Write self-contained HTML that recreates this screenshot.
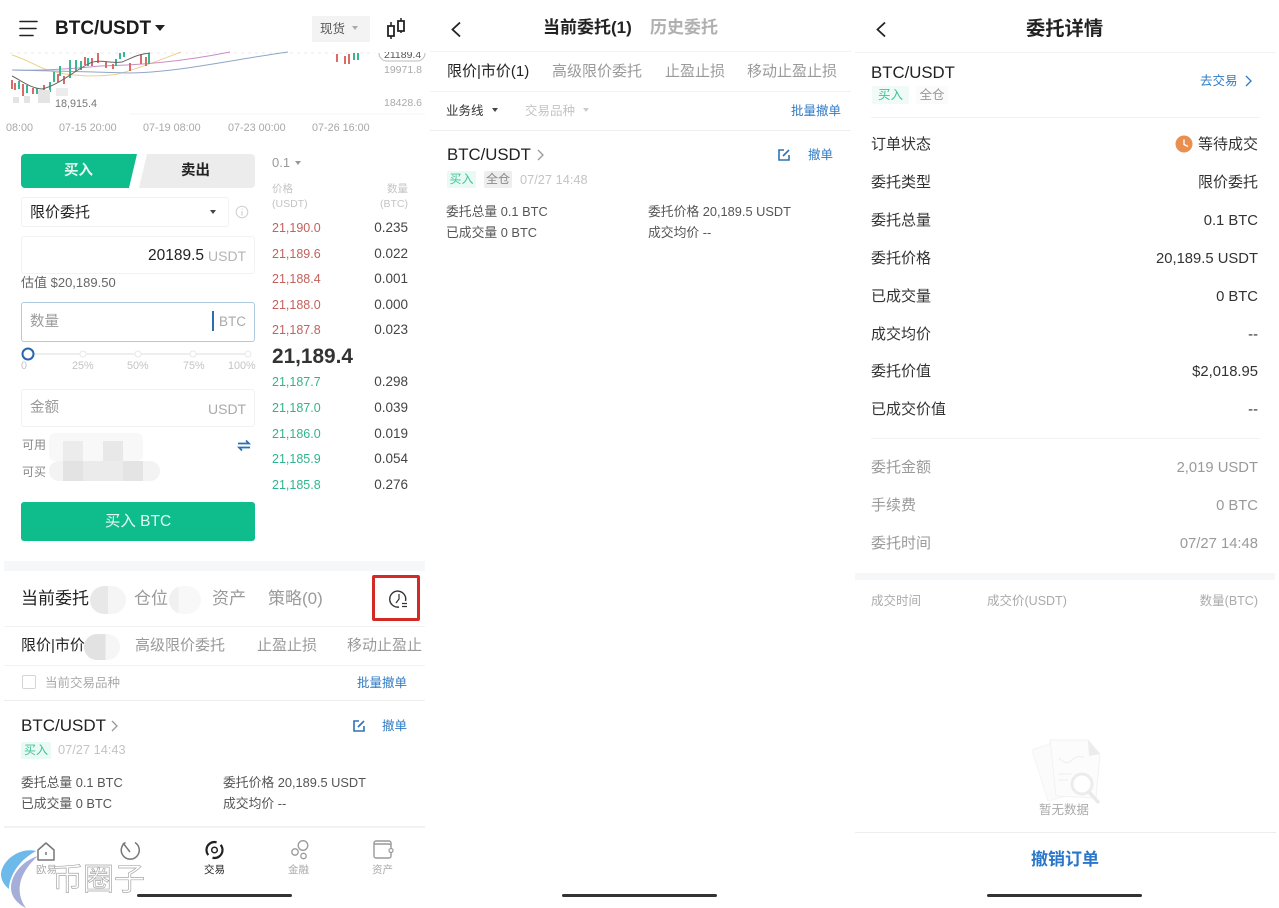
<!DOCTYPE html>
<html lang="zh"><head><meta charset="utf-8"><title>BTC/USDT</title>
<style>
html,body{margin:0;padding:0;background:#fff}
#p{position:relative;width:1279px;height:908px;overflow:hidden;background:#fff;font-family:"Liberation Sans","Noto Sans CJK SC",sans-serif;color:#222;filter:blur(.3px)}
.t{position:absolute;white-space:nowrap;line-height:20px;height:20px}
.l{position:absolute;height:1px;background:#f1f2f3}
.g{color:#9a9a9a}.lg{color:#c4c4c4}.b{color:#2f7bc4}.d{color:#555}
.red{color:#c4615c;font-size:12.500px;left:272px}
.grn{color:#2fb58d;font-size:12.500px;left:272px}
.q{color:#444;font-size:13.500px;left:340px;width:68px;text-align:right}
.box{position:absolute;box-sizing:border-box;border:1px solid #f2f2f2;border-radius:3px}
.tag{position:absolute;background:#e9f9f3;color:#3cc498;font-size:12px;line-height:17px;height:17px;text-align:center;border-radius:2px}
.bl{position:absolute}
.car{position:absolute;width:0;height:0;border-left:3.500px solid transparent;border-right:3.500px solid transparent;border-top:4.500px solid #444}
.bar{position:absolute;height:3px;width:155px;background:#333;border-radius:2px;top:894px}
.x{font-size:10.800px;color:#a8a8a8;top:118px}
.v{left:1100px;width:158px;text-align:right;font-size:14.800px;color:#333}
.k{left:871px;font-size:15px;color:#333}
svg{position:absolute;overflow:visible}
</style></head><body><div id="p">

<!-- PANEL 1 -->
<svg style="left:0;top:0" width="430" height="130">
<g stroke="#222" stroke-width="1.600" fill="none" stroke-linecap="round"><path d="M20 21.500H37M20 28.500H36M20 35.500H33"/></g>
<path d="M388 26h6v10h-6z M398 21h6v10h-6z" fill="none" stroke="#222" stroke-width="1.800"/>
<path d="M391 22v4M391 36v3M401 18v3M401 31v2" stroke="#222" stroke-width="1.500"/>
<path d="M10 53H375" stroke="#e8e8e8" stroke-dasharray="3 4"/>
<path d="M130 114H425" stroke="#f6f6f6"/>
<g fill="none" stroke-width="1">
<path d="M12 55C28 60 36 66 47 70C70 77 100 77 118 74C140 68 160 60 181 52" stroke="#ecd18a"/>
<path d="M12 70C40 71 70 69 100 66C140 65 180 62 230 52" stroke="#c98fc6"/>
<path d="M12 70C60 71 90 72 130 73C180 72 230 60 288 52" stroke="#8fa6c7"/>
</g>
<g stroke-width="2">
<g stroke="#d96b69"><path d="M12 80v9M15 83v7M23 84v12M33 88v6M44 85v8M58 74v8M64 76v8M85 57v8M92 58v8M98 53v10M106 62v6M113 64v5M130 63v8M141 54v10M146 57v9M337 54v8M345 56v8M349 54v10"/></g>
<g stroke="#37b892"><path d="M19 81v8M27 85v8M37 88v6M50 82v10M54 72v10M60 66v10M70 60v18M76 60v12M81 61v9M88 58v8M116 59v7M120 53v6M124 52v5M149 53v11M354 53v7M358 53v7"/></g>
</g>
<path d="M12 76C22 81 30 88 42 89C58 85 70 74 88 64C100 58 110 64 122 62C132 58 138 54 150 53" fill="none" stroke="#666"/>
<g fill="#e4e4e4"><rect x="13" y="97" width="6" height="6"/><rect x="24" y="96" width="6" height="7"/><rect x="38" y="90" width="12" height="13"/><rect x="56" y="88" width="12" height="8" fill="#ececec"/></g>
<path d="M379 53a8 8 0 0 0 7 8h32a8 8 0 0 0 7-8" fill="none" stroke="#bbb"/>
</svg>
<div class="t" style="left:55px;top:19px;font-size:19px;font-weight:700;color:#1c1c1c">BTC/USDT</div>
<div class="car" style="left:155px;top:25px;border-left-width:5px;border-right-width:5px;border-top:6px solid #222"></div>
<div class="bl" style="left:312px;top:16px;width:58px;height:26px;background:#f3f3f3"></div>
<div class="t d" style="left:320px;top:19px;font-size:12.500px">现货</div>
<div class="car" style="left:352px;top:26px;border-top-color:#aaa"></div>
<div class="bl" style="left:380px;top:52px;width:45px;height:10px;overflow:hidden"><div class="t" style="left:4px;top:-7px;font-size:10.500px;color:#555">21189.4</div></div>
<div class="t g" style="left:384px;top:60px;font-size:10.500px;color:#aaa">19971.8</div>
<div class="t g" style="left:384px;top:93px;font-size:10.500px;color:#aaa">18428.6</div>
<div class="t d" style="left:55px;top:94px;font-size:10.800px;color:#777">18,915.4</div>
<div class="t x" style="left:6px">08:00</div>
<div class="t x" style="left:59px">07-15 20:00</div>
<div class="t x" style="left:143px">07-19 08:00</div>
<div class="t x" style="left:228px">07-23 00:00</div>
<div class="t x" style="left:312px">07-26 16:00</div>

<svg style="left:0;top:150px" width="260" height="40">
<path d="M25 4H137L129 38H25a4 4 0 0 1-4-4V8a4 4 0 0 1 4-4z" fill="#0fbc8c"/>
<path d="M147 4H251a4 4 0 0 1 4 4V34a4 4 0 0 1-4 4H139z" fill="#ececec"/>
</svg>
<div class="t" style="left:64px;top:161px;font-size:14.500px;font-weight:700;color:#e4f9f2">买入</div>
<div class="t" style="left:181px;top:161px;font-size:14.500px;font-weight:700">卖出</div>
<div class="box" style="left:21px;top:197px;width:208px;height:30px"></div>
<div class="t" style="left:30px;top:203px;font-size:15px;color:#222">限价委托</div>
<div class="car" style="left:210px;top:210px"></div>
<svg style="left:235px;top:205px" width="14" height="14"><circle cx="7" cy="7" r="5.800" fill="none" stroke="#cfcfcf"/><path d="M7.300 3.800v.8M7 6v4.500" stroke="#c8c8c8"/></svg>
<div class="box" style="left:21px;top:236px;width:234px;height:38px"></div>
<div class="t" style="left:148px;top:246px;font-size:15.500px;color:#222">20189.5</div>
<div class="t lg" style="left:208px;top:246px;font-size:14px;color:#b5b5b5">USDT</div>
<div class="t d" style="left:21px;top:273px;font-size:13px;color:#666">估值 $20,189.50</div>
<div class="box" style="left:21px;top:302px;width:234px;height:40px;border:1px solid #aecadf"></div>
<div class="t g" style="left:30px;top:312px;font-size:14.500px">数量</div>
<div class="bl" style="left:212px;top:311px;width:2px;height:20px;background:#2d6eb0"></div>
<div class="t g" style="left:219px;top:312px;font-size:13.500px;color:#aaa">BTC</div>
<svg style="left:0;top:345px" width="260" height="20">
<path d="M28 9H248" stroke="#eee" stroke-width="2"/>
<g fill="#fff" stroke="#e8e8e8"><circle cx="83" cy="9" r="3"/><circle cx="138" cy="9" r="3"/><circle cx="193" cy="9" r="3"/><circle cx="248" cy="9" r="3"/></g>
<circle cx="28" cy="9" r="5.500" fill="#fff" stroke="#2767ad" stroke-width="2"/>
</svg>
<div class="t lg" style="left:21px;top:356px;font-size:10.800px">0</div>
<div class="t lg" style="left:72px;top:356px;font-size:10.800px">25%</div>
<div class="t lg" style="left:127px;top:356px;font-size:10.800px">50%</div>
<div class="t lg" style="left:183px;top:356px;font-size:10.800px">75%</div>
<div class="t lg" style="left:228px;top:356px;font-size:10.800px">100%</div>
<div class="box" style="left:21px;top:389px;width:234px;height:38px"></div>
<div class="t g" style="left:30px;top:398px;font-size:14.500px">金额</div>
<div class="t g" style="left:208px;top:399px;font-size:14px;color:#aaa">USDT</div>
<div class="t g" style="left:22px;top:435px;font-size:12px;color:#888">可用</div>
<div class="t g" style="left:22px;top:462px;font-size:12px;color:#888">可买</div>
<div class="bl" style="left:49px;top:433px;width:94px;height:28px;background:#f8f8f8;border-radius:6px"></div>
<div class="bl" style="left:49px;top:461px;width:111px;height:20px;background:#f3f3f3;border-radius:10px"></div>
<div class="bl" style="left:63px;top:441px;width:20px;height:20px;background:#ececec"></div>
<div class="bl" style="left:103px;top:441px;width:20px;height:20px;background:#e8e8e8"></div>
<div class="bl" style="left:63px;top:461px;width:20px;height:20px;background:#e3e3e3"></div>
<div class="bl" style="left:83px;top:461px;width:40px;height:20px;background:#ebebeb"></div>
<div class="bl" style="left:123px;top:461px;width:20px;height:20px;background:#e4e4e4"></div>
<svg style="left:237px;top:439px" width="14" height="13"><path d="M1 4.500H12L9 1.500M13 8.500H2L5 11.500" fill="none" stroke="#2a70b5" stroke-width="1.700"/></svg>
<div class="bl" style="left:21px;top:502px;width:234px;height:39px;background:#0fbc8c;border-radius:3px"></div>
<div class="t" style="left:21px;width:234px;text-align:center;top:512px;font-size:15.500px;color:#e4f9f2">买入 BTC</div>

<div class="t g" style="left:272px;top:153px;font-size:13px">0.1</div>
<div class="car" style="left:295px;top:161px;border-top-color:#999"></div>
<div class="t lg" style="left:272px;top:179px;font-size:10.500px">价格</div>
<div class="t lg" style="left:272px;top:194px;font-size:10.500px">(USDT)</div>
<div class="t lg" style="left:340px;width:68px;text-align:right;top:179px;font-size:10.500px">数量</div>
<div class="t lg" style="left:340px;width:68px;text-align:right;top:194px;font-size:10.500px">(BTC)</div>
<div class="t red" style="top:218px">21,190.0</div><div class="t q" style="top:218px">0.235</div>
<div class="t red" style="top:244px">21,189.6</div><div class="t q" style="top:244px">0.022</div>
<div class="t red" style="top:269px">21,188.4</div><div class="t q" style="top:269px">0.001</div>
<div class="t red" style="top:295px">21,188.0</div><div class="t q" style="top:295px">0.000</div>
<div class="t red" style="top:320px">21,187.8</div><div class="t q" style="top:320px">0.023</div>
<div class="t" style="left:272px;top:347px;font-size:20.800px;font-weight:700;color:#333">21,189.4</div>
<div class="t grn" style="top:372px">21,187.7</div><div class="t q" style="top:372px">0.298</div>
<div class="t grn" style="top:398px">21,187.0</div><div class="t q" style="top:398px">0.039</div>
<div class="t grn" style="top:424px">21,186.0</div><div class="t q" style="top:424px">0.019</div>
<div class="t grn" style="top:449px">21,185.9</div><div class="t q" style="top:449px">0.054</div>
<div class="t grn" style="top:475px">21,185.8</div><div class="t q" style="top:475px">0.276</div>

<div class="bl" style="left:4px;top:561px;width:421px;height:10px;background:#f6f7f8"></div>
<div class="t" style="left:21px;top:589px;font-size:17px;color:#222">当前委托</div>
<div class="bl" style="left:90px;top:586px;width:36px;height:28px;background:linear-gradient(90deg,#e8e8e8 50%,#f5f5f5 50%);border-radius:14px"></div>
<div class="t g" style="left:134px;top:589px;font-size:17px">仓位</div>
<div class="bl" style="left:169px;top:586px;width:32px;height:28px;background:linear-gradient(90deg,#f0f0f0 30%,#f8f8f8 30%);border-radius:14px"></div>
<div class="t g" style="left:212px;top:589px;font-size:17px">资产</div>
<div class="t g" style="left:268px;top:589px;font-size:17px">策略(0)</div>
<div class="bl" style="left:372px;top:575px;width:48px;height:46px;box-sizing:border-box;border:3px solid #d32a26;border-radius:2px"></div>
<svg style="left:388px;top:589px" width="22" height="22"><path d="M17.500 12A8 8 0 1 0 11 18" fill="none" stroke="#333" stroke-width="1.400"/><path d="M11 5V10L8 14" fill="none" stroke="#333" stroke-width="1.200"/><path d="M14 14.500h5M14 17.500h5" stroke="#333" stroke-width="1.200"/></svg>
<div class="l" style="left:4px;top:626px;width:421px"></div>
<div class="t" style="left:21px;top:636px;font-size:15px">限价|市价</div>
<div class="bl" style="left:84px;top:634px;width:36px;height:26px;background:linear-gradient(90deg,#e2e2e2 60%,#f6f6f6 60%);border-radius:13px"></div>
<div class="t g" style="left:135px;top:636px;font-size:15px">高级限价委托</div>
<div class="t g" style="left:257px;top:636px;font-size:15px">止盈止损</div>
<div class="bl" style="left:347px;top:630px;width:75px;height:30px;overflow:hidden"><div class="t g" style="left:0;top:6px;font-size:15px">移动止盈止损</div></div>
<div class="l" style="left:4px;top:665px;width:421px"></div>
<div class="bl" style="left:22px;top:675px;width:14px;height:14px;border:1.500px solid #d5d5d5;border-radius:2px;box-sizing:border-box"></div>
<div class="t lg" style="left:45px;top:673px;font-size:12.500px;color:#aaa">当前交易品种</div>
<div class="t b" style="left:357px;top:673px;font-size:12.500px">批量撤单</div>
<div class="l" style="left:4px;top:700px;width:421px;background:#eee"></div>
<div class="t" style="left:21px;top:716px;font-size:17px">BTC/USDT</div>
<svg style="left:110px;top:720px" width="10" height="12"><path d="M2 1L7 6L2 11" fill="none" stroke="#999" stroke-width="1.300"/></svg>
<svg style="left:352px;top:719px" width="14" height="14"><path d="M7 2H2V12H12V7M6 8L12 2" fill="none" stroke="#2f74b5" stroke-width="1.600"/></svg>
<div class="t b" style="left:382px;top:716px;font-size:12.500px">撤单</div>
<div class="tag" style="left:21px;top:742px;width:30px">买入</div>
<div class="t lg" style="left:58px;top:740px;font-size:12.800px">07/27 14:43</div>
<div class="t d" style="left:21px;top:773px;font-size:12.800px">委托总量 0.1 BTC</div>
<div class="t d" style="left:223px;top:773px;font-size:12.800px">委托价格 20,189.5 USDT</div>
<div class="t d" style="left:21px;top:794px;font-size:12.800px">已成交量 0 BTC</div>
<div class="t d" style="left:223px;top:794px;font-size:12.800px">成交均价 --</div>
<div class="l" style="left:4px;top:826px;width:421px;height:2px"></div>

<svg style="left:0;top:835px" width="430" height="73">
<path d="M38 15L46 8L54 15V25H38z" fill="none" stroke="#777" stroke-width="1.500" stroke-linejoin="round"/><path d="M46 17v3" stroke="#777" stroke-width="1.500"/>
<path d="M125.500 7.500A9 9 0 1 0 135 7.500" fill="none" stroke="#777" stroke-width="1.500"/><path d="M123 8L130 17" stroke="#777" stroke-width="1.500"/>
<circle cx="214.500" cy="15" r="8" fill="none" stroke="#222" stroke-width="2.200" stroke-dasharray="20 5.100" transform="rotate(-40 214.500 15)"/><circle cx="214.500" cy="15" r="2.800" fill="none" stroke="#222" stroke-width="1.500"/>
<g fill="none" stroke="#999" stroke-width="1.300"><circle cx="303" cy="10.500" r="4.800"/><circle cx="295" cy="17" r="3.200"/><circle cx="303.500" cy="21" r="2.700"/></g>
<path d="M391 11V8a2 2 0 0 0-2-2H376a2 2 0 0 0-2 2V21a2 2 0 0 0 2 2H389a2 2 0 0 0 2-2V18M374 9H389a2 2 0 0 1 2 2V13" fill="none" stroke="#999" stroke-width="1.400"/><circle cx="391" cy="15.500" r="2" fill="#fff" stroke="#999" stroke-width="1.200"/>
</svg>
<div class="t lg" style="left:36px;top:860px;font-size:10.500px;color:#aaa">欧易</div>
<div class="t" style="left:204px;top:860px;font-size:10.500px;color:#222">交易</div>
<div class="t lg" style="left:288px;top:860px;font-size:10.500px;color:#aaa">金融</div>
<div class="t lg" style="left:372px;top:860px;font-size:10.500px;color:#aaa">资产</div>
<div class="bar" style="left:137px"></div>

<svg style="left:0;top:830px" width="60" height="78">
<path d="M36 21C20 17 2 30 1 44C1 50 4 55 9 59C9 49 16 32 36 21z" fill="#6db9ea"/>
<path d="M38 26C22 31 11 45 11 58C11 67 18 74 26 78C20 70 18 60 21 50C24 41 30 33 38 26z" fill="#a5add9"/>
</svg>
<div class="t" style="left:52px;top:865px;height:30px;line-height:30px;font-size:31px;color:rgba(255,255,255,.85);-webkit-text-stroke:.7px #a8a8a8">币圈子</div>

<!-- PANEL 2 -->
<div class="l" style="left:430px;top:51px;width:421px"></div>
<svg style="left:450px;top:21px" width="12" height="17"><path d="M10 1.500L2.500 8.500L10 15.500" fill="none" stroke="#222" stroke-width="1.800"/></svg>
<div class="t" style="left:543px;top:18px;font-size:17px;font-weight:700">当前委托(1)</div>
<div class="t" style="left:650px;top:18px;font-size:17px;font-weight:700;color:#b0b0b0">历史委托</div>
<div class="t" style="left:447px;top:62px;font-size:15px">限价|市价(1)</div>
<div class="t g" style="left:552px;top:62px;font-size:15px">高级限价委托</div>
<div class="t g" style="left:665px;top:62px;font-size:15px">止盈止损</div>
<div class="t g" style="left:747px;top:62px;font-size:15px">移动止盈止损</div>
<div class="l" style="left:430px;top:91px;width:421px"></div>
<div class="t d" style="left:446px;top:101px;font-size:12.500px;color:#333">业务线</div>
<div class="car" style="left:492px;top:108px"></div>
<div class="t lg" style="left:525px;top:101px;font-size:12.500px">交易品种</div>
<div class="car" style="left:583px;top:108px;border-top-color:#ccc"></div>
<div class="t b" style="left:791px;top:101px;font-size:12.500px">批量撤单</div>
<div class="l" style="left:430px;top:130px;width:421px;background:#eee"></div>
<div class="t" style="left:447px;top:145px;font-size:16.800px">BTC/USDT</div>
<svg style="left:536px;top:149px" width="10" height="12"><path d="M2 1L7 6L2 11" fill="none" stroke="#999" stroke-width="1.300"/></svg>
<svg style="left:777px;top:148px" width="14" height="14"><path d="M7 2H2V12H12V7M6 8L12 2" fill="none" stroke="#2f74b5" stroke-width="1.600"/></svg>
<div class="t b" style="left:808px;top:145px;font-size:12.500px">撤单</div>
<div class="tag" style="left:447px;top:171px;width:29px">买入</div>
<div class="tag" style="left:484px;top:171px;width:28px;background:#eee;color:#888">全仓</div>
<div class="t lg" style="left:520px;top:170px;font-size:12.800px">07/27 14:48</div>
<div class="t d" style="left:446px;top:202px;font-size:12.800px">委托总量 0.1 BTC</div>
<div class="t d" style="left:648px;top:202px;font-size:12.800px">委托价格 20,189.5 USDT</div>
<div class="t d" style="left:446px;top:223px;font-size:12.800px">已成交量 0 BTC</div>
<div class="t d" style="left:648px;top:223px;font-size:12.800px">成交均价 --</div>
<div class="bar" style="left:562px"></div>

<!-- PANEL 3 -->
<div class="l" style="left:855px;top:52px;width:421px"></div>
<svg style="left:875px;top:21px" width="12" height="17"><path d="M10 1.500L2.500 8.500L10 15.500" fill="none" stroke="#222" stroke-width="1.800"/></svg>
<div class="t" style="left:1026px;top:20px;font-size:19.300px;font-weight:700">委托详情</div>
<div class="t" style="left:871px;top:63px;font-size:16.800px">BTC/USDT</div>
<div class="tag" style="left:872px;top:86px;width:37px;height:18px;line-height:18px;font-size:12.500px;background:#f0faf7">买入</div>
<div class="tag" style="left:916px;top:86px;width:32px;height:18px;line-height:18px;font-size:12.500px;background:#fbfbfb;color:#999">全仓</div>
<div class="t b" style="left:1200px;top:71px;font-size:12.500px">去交易</div>
<svg style="left:1244px;top:75px" width="10" height="12"><path d="M2 1L7 6L2 11" fill="none" stroke="#2f7bc4" stroke-width="1.300"/></svg>
<div class="l" style="left:871px;top:117px;width:389px"></div>
<div class="t k" style="top:135px">订单状态</div>
<svg style="left:1175px;top:135px" width="18" height="18"><circle cx="9" cy="9" r="8.500" fill="#e98f50"/><path d="M9 4.500V9.500L13 11.500" fill="none" stroke="#fff" stroke-width="1.400"/></svg>
<div class="t v" style="top:135px;font-size:15px">等待成交</div>
<div class="t k" style="top:173px">委托类型</div>
<div class="t v" style="top:173px;font-size:15px">限价委托</div>
<div class="t k" style="top:211px">委托总量</div>
<div class="t v" style="top:211px">0.1 BTC</div>
<div class="t k" style="top:249px">委托价格</div>
<div class="t v" style="top:249px">20,189.5 USDT</div>
<div class="t k" style="top:287px">已成交量</div>
<div class="t v" style="top:287px">0 BTC</div>
<div class="t k" style="top:325px">成交均价</div>
<div class="t v" style="top:325px">--</div>
<div class="t k" style="top:362px">委托价值</div>
<div class="t v" style="top:362px">$2,018.95</div>
<div class="t k" style="top:400px">已成交价值</div>
<div class="t v" style="top:400px">--</div>
<div class="l" style="left:871px;top:438px;width:389px"></div>
<div class="t k" style="top:458px;color:#9a9a9a">委托金额</div>
<div class="t v" style="top:458px;color:#9a9a9a">2,019 USDT</div>
<div class="t k" style="top:496px;color:#9a9a9a">手续费</div>
<div class="t v" style="top:496px;color:#9a9a9a">0 BTC</div>
<div class="t k" style="top:534px;color:#9a9a9a">委托时间</div>
<div class="t v" style="top:534px;color:#9a9a9a">07/27 14:48</div>
<div class="bl" style="left:855px;top:573px;width:420px;height:7px;background:#f6f7f8"></div>
<div class="t lg" style="left:871px;top:591px;font-size:12.500px;color:#aaa">成交时间</div>
<div class="t lg" style="left:987px;top:591px;font-size:12.500px;color:#aaa">成交价(USDT)</div>
<div class="t lg" style="left:1100px;width:158px;text-align:right;top:591px;font-size:12.500px;color:#aaa">数量(BTC)</div>
<svg style="left:1028px;top:736px" width="75" height="70">
<path d="M4 14L30 5L38 60L20 65z" fill="#fbfbfb" stroke="#f4f4f4"/>
<path d="M22 4H60L72 18L68 62L28 60z" fill="#fcfcfc" stroke="#f2f2f2"/>
<path d="M60 4L72 18L61 20z" fill="#ececec"/>
<path d="M31 22Q38 30 44 24T56 22M30 38H44M30 44H40" fill="none" stroke="#eee"/>
<circle cx="54" cy="48" r="10" fill="#fff" stroke="#ececec" stroke-width="3"/>
<path d="M61 56L71 67" stroke="#eaeaea" stroke-width="3.500"/>
</svg>
<div class="t g" style="left:1039px;top:800px;font-size:12.500px;color:#aaa">暂无数据</div>
<div class="l" style="left:855px;top:832px;width:421px;background:#eee"></div>
<div class="t" style="left:1031px;top:850px;font-size:17px;font-weight:700;color:#2a76c8">撤销订单</div>
<div class="bar" style="left:987px"></div>
</div></body></html>
